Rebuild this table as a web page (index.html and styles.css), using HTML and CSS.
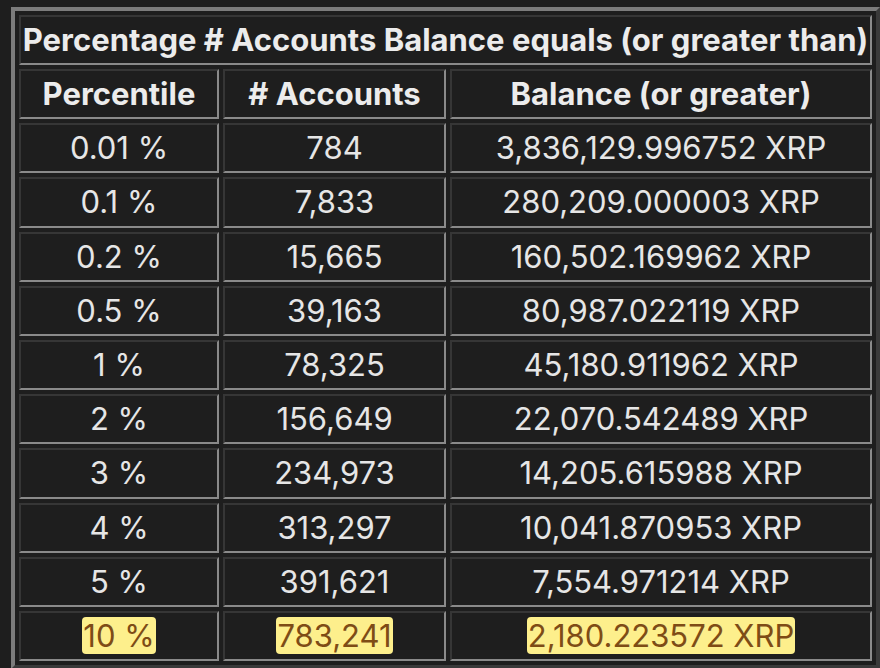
FILE: index.html
```html
<!DOCTYPE html>
<html lang="en">
<head>
<meta charset="utf-8">
<title>Percentage # Accounts Balance</title>
<link rel="stylesheet" href="styles.css">
</head>
<body>
<table class="stats">
  <colgroup>
    <col class="c1">
    <col class="c2">
    <col class="c3">
  </colgroup>
  <thead>
    <tr><th class="title" colspan="3">Percentage # Accounts Balance equals (or greater than)</th></tr>
    <tr>
      <th>Percentile</th>
      <th># Accounts</th>
      <th>Balance (or greater)</th>
    </tr>
  </thead>
  <tbody>
    <tr><td>0.01 %</td><td>784</td><td>3,836,129.996752 XRP</td></tr>
    <tr><td>0.1 %</td><td>7,833</td><td>280,209.000003 XRP</td></tr>
    <tr><td>0.2 %</td><td>15,665</td><td>160,502.169962 XRP</td></tr>
    <tr><td>0.5 %</td><td>39,163</td><td>80,987.022119 XRP</td></tr>
    <tr><td>1 %</td><td>78,325</td><td>45,180.911962 XRP</td></tr>
    <tr><td>2 %</td><td>156,649</td><td>22,070.542489 XRP</td></tr>
    <tr><td>3 %</td><td>234,973</td><td>14,205.615988 XRP</td></tr>
    <tr><td>4 %</td><td>313,297</td><td>10,041.870953 XRP</td></tr>
    <tr><td>5 %</td><td>391,621</td><td>7,554.971214 XRP</td></tr>
    <tr class="hl"><td><mark>10 %</mark></td><td><mark>783,241</mark></td><td><mark>2,180.223572 XRP</mark></td></tr>
  </tbody>
</table>
</body>
</html>
```

FILE: styles.css
```css
html, body {
  background: #1e1e1e;
}
body {
  margin: 7px 0 0 11px;
  font-family: Inter, "Noto Sans", sans-serif;
  color: #e6e6e6;
}
.stats {
  border-collapse: separate;
  border-spacing: 4px;
  border-style: solid;
  border-width: 4px;
  border-color: #7c7c7c #3a3a3a #3a3a3a #7c7c7c;
  width: 869px;
  table-layout: fixed;
  background: #1e1e1e;
}
.c1 { width: 200px; }
.c2 { width: 223px; }
.c3 { width: 422px; }
.stats th,
.stats td {
  border-style: solid;
  border-width: 2px;
  border-color: #363636 #8a8a8a #8a8a8a #363636;
  padding: 0 1px;
  height: 50.2px;
  box-sizing: border-box;
  text-align: center;
  vertical-align: middle;
  font-size: 31px;
  line-height: 36px;
  white-space: nowrap;
}
.stats th {
  font-weight: 700;
  color: #ececec;
}
.stats .title {
  height: 50px;
}
.stats td {
  font-weight: 400;
}
mark {
  background: #fdef8c;
  color: #7e4c16;
  border-radius: 4px;
  padding: 0 1px;
}
```
